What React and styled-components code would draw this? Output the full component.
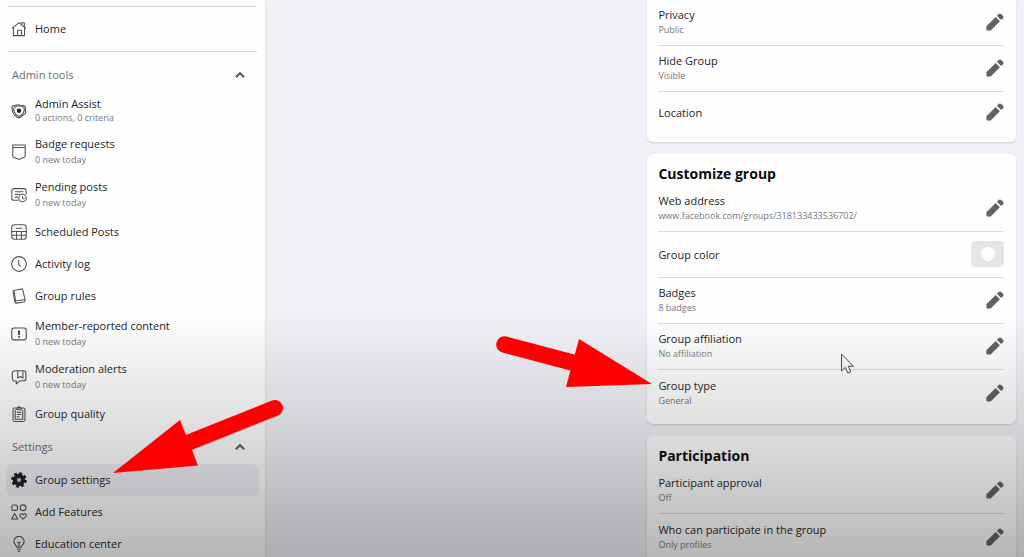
import React from "react";
import styled, { createGlobalStyle } from "styled-components";

const GlobalStyle = createGlobalStyle`
  * { box-sizing: border-box; }
  body { margin: 0; background: #f0f1f6; }
  h2, h3, p { margin: 0; }
  button { border: 0; padding: 0; background: none; font: inherit; color: inherit; cursor: pointer; }
`;

const Page = styled.div`
  position: relative;
  display: flex;
  justify-content: space-between;
  height: 100vh;
  overflow: hidden;
  font-family: "Open Sans", "Noto Sans", sans-serif;
  font-size: 11px;
  line-height: 14px;
  color: #242528;
`;

const Sidebar = styled.nav`
  width: 25%;
  min-width: 265px;
  flex-shrink: 0;
  padding: 6px 6px 0;
  background: #fefefe;
  box-shadow: 0 0 3px rgba(0, 0, 0, 0.12);
`;

const Rule = styled.hr`
  height: 1px;
  margin: 0 2px;
  border: 0;
  background: #dcdde1;
`;

const HomeBlock = styled.div`
  padding: 6px 0;
`;

const SectionToggle = styled.button`
  display: flex;
  align-items: center;
  justify-content: space-between;
  width: 100%;
  height: 34px;
  margin-top: ${(p) => (p.$spaced ? "6px" : "0")};
  padding: 0 14px 0 6px;
  font-weight: 500;
  color: #6c6d71;
  text-align: left;
`;

const NavItem = styled.a`
  display: flex;
  align-items: center;
  gap: 8px;
  height: ${(p) => p.$height}px;
  padding: 0 5px;
  border-radius: 6px;
  background: ${(p) => (p.$active ? "#f0f0f6" : "transparent")};
  color: inherit;
  text-decoration: none;
`;

const NavText = styled.span`
  display: flex;
  flex-direction: column;
  line-height: ${(p) => (p.$tight ? "14px" : "16px")};
`;

const Label = styled.span`
  font-weight: 500;
`;

const Note = styled.span`
  font-size: 9px;
  color: #77787c;
`;

const Content = styled.main`
  width: 36%;
  min-width: 368px;
  margin-right: 8px;
`;

const Card = styled.section`
  margin-bottom: 12px;
  padding: ${(p) => (p.$continued ? "0 12px 9px 11px" : "10px 12px 8px 11px")};
  border-radius: ${(p) => (p.$continued ? "0 0 6px 6px" : "6px")};
  background: #fefefe;
  box-shadow: 0 1px 2px rgba(0, 0, 0, 0.14);
`;

const CardTitle = styled.h2`
  font-size: 14px;
  line-height: 20px;
  padding-bottom: 2px;
  font-weight: 700;
  color: #0c0d0f;
`;

const SettingRow = styled.div`
  display: flex;
  align-items: center;
  justify-content: space-between;
  min-height: ${(p) => (p.$short ? "41px" : "46px")};
  padding: 7px 0 8px;
  border-bottom: 1px solid #dcdde1;
  &:last-child { border-bottom: 0; }
`;

const SettingText = styled.div`
  display: flex;
  flex-direction: column;
  line-height: 15px;
`;

const EditButton = styled.button`
  display: flex;
  color: #616266;
`;

const ColorButton = styled.button`
  display: flex;
  align-items: center;
  justify-content: center;
  width: 33px;
  height: 26px;
  border-radius: 4px;
  background: #e5e5ea;
`;

const Swatch = styled.span`
  width: 14px;
  height: 14px;
  border-radius: 50%;
  background: #fefefe;
`;

const Shade = styled.div`
  position: absolute;
  inset: 0;
  pointer-events: none;
  background: linear-gradient(
    to bottom,
    rgba(0, 0, 0, 0) 56%,
    rgba(0, 0, 0, 0.04) 63%,
    rgba(0, 0, 0, 0.12) 76%,
    rgba(0, 0, 0, 0.28) 100%
  );
`;

const Annotation = styled.svg`
  position: absolute;
  left: ${(p) => p.$x}px;
  top: ${(p) => p.$y}px;
  pointer-events: none;
`;

const NavIcon = styled.svg`
  flex-shrink: 0;
  color: ${(p) => (p.$solid ? "#1f2022" : "#505155")};
`;

const icons = {
  home: (
    <>
      <path d="M1 7 7.500 1.500 14 7M2.300 6v7.700h10.400V6M10 3.400V1.700h2.500v4" />
      <path d="M6.200 13.500V8.700h3.600v4.800" />
    </>
  ),
  assist: (
    <>
      <path d="M1 3.500C2 1.800 4 2.300 5.500 1.900 8 1.200 9 2.800 11 2.500c2-.2 3 1 2.400 2.800-.4 1.500.8 2.500.3 4-.6 1.700-2.200 1.500-3.300 2.700-1.200 1.400-2.800 2.500-4.400 1.400-1.200-.9-2.500-1-3-2.500C2.500 9.300 1 8.700 1.300 6.900 1.400 5.700.4 4.700 1 3.500z" />
      <path d="M3 4.200C5 2.500 10 2.200 12 4.200c1.500 2-.7 7.300-4 8.200C4.500 12.700 1.300 6.300 3 4.200z" />
      <circle cx="7.500" cy="7.200" r="1.600" fill="#1f2022" stroke="#1f2022" />
    </>
  ),
  badge: <path d="M1.700 1h11.600v10.200q0 .8-.8 1.200L8.500 14q-1 .5-2 0l-4-1.600q-.8-.4-.8-1.200zM1.700 3.300h11.600" />,
  pending: (
    <>
      <path d="M7 12.500H2.800A2 2 0 0 1 .8 10.500v-7a2 2 0 0 1 2-2h9.400a2 2 0 0 1 2 2v3.300M3.500 4.500h8M3.500 7h4.500M3.500 9.500h3" />
      <circle cx="10.800" cy="10.300" r="3.500" />
      <path d="M10.800 8.500v2h2" />
    </>
  ),
  scheduled: (
    <>
      <rect x=".7" y=".7" width="13.600" height="13.600" rx="2.500" />
      <path d="M.7 7h13.600M.7 10.600h13.600M5.200 7v7.300M9.800 7v7.300M4.500 4h6" />
    </>
  ),
  clock: (
    <>
      <circle cx="7.500" cy="7.500" r="6.900" />
      <path d="M7.200 3.500v4.500l2 1.700" />
    </>
  ),
  rules: (
    <>
      <path d="M2.600 2.300 9.800.9q1-.2 1.200.8l2.200 9-8.800 1.500z" />
      <path d="M2.600 2.300q-.8.300-.6 1.300l1.600 9.600q.3 1.200 1.500 1l7.800-1.400.3-2.100M4.400 12.200l-.9.600" />
    </>
  ),
  report: (
    <>
      <rect x=".7" y="1.800" width="13.600" height="11.200" rx="2" />
      <path d="M7.500 4.200v4.300M7.500 9.700v1.300" stroke="#1f2022" strokeWidth="1.500" />
    </>
  ),
  moderation: (
    <>
      <path d="M4.500 1.700h7.300a2.200 2.200 0 0 1 2.200 2.200v5a2.200 2.200 0 0 1-2.200 2.200H8.300L5 14v-2.800H3.400A2.200 2.200 0 0 1 1.200 9V4.300q0-2.600 3.300-2.600z" />
      <path d="M6.300 1.700v6.800l2.500-1.500 2.400 1.500V1.700" />
    </>
  ),
  quality: (
    <>
      <rect x="1.900" y="1.800" width="11.200" height="12.700" rx="1.500" />
      <path d="M5.500 3.600V1.700h1L7.500.5l1 1.200h1v1.900zM4 3.500v8.900h7V3.500M5.500 6h4M5.500 8h4M5.500 10h2.500" />
    </>
  ),
  gear: (
    <>
      <circle cx="7.500" cy="7.500" r="3.900" strokeWidth="3.800" />
      <circle cx="7.500" cy="7.500" r="6.200" strokeWidth="2.200" strokeDasharray="2.700 2.170" />
      <circle cx="7.500" cy="7.500" r="1.400" stroke="#85868a" strokeWidth=".8" />
    </>
  ),
  features: (
    <>
      <rect x=".8" y="1" width="5.200" height="5" rx="1.300" />
      <circle cx="11.300" cy="3.500" r="2.700" />
      <path d="M3.400 9 6.300 14H.6zM11.300 14.200 8.600 11.600c-1.300-2 1.500-3.300 2.700-1.500 1.200-1.800 4-.5 2.700 1.500z" />
    </>
  ),
  bulb: (
    <path d="M5.500 10.500C5.200 8.700 2.700 8 2.700 5.200a4.800 4.800 0 0 1 9.600 0c0 2.800-2.500 3.500-2.800 5.300zM5.500 12.500h4M6.300 14.300h2.400M7.500 10.500V7l-1.500-1.500M7.500 7 9 5.500" />
  ),
};

const Icon = ({ name }) => (
  <NavIcon $solid={name === "gear"} width="16" height="16" viewBox="0 0 15 15" fill="none" stroke="currentColor" strokeWidth="1" strokeLinejoin="round" aria-hidden="true">
    {icons[name]}
  </NavIcon>
);

const Chevron = () => (
  <svg width="10" height="6" viewBox="0 0 10 6" fill="none" stroke="#5a5b5f" strokeWidth="2" aria-hidden="true">
    <path d="M.8 5.200 5 1.200l4.200 4" />
  </svg>
);

const Pencil = () => (
  <svg width="18" height="18" viewBox="0 0 18 18" fill="currentColor" aria-hidden="true">
    <path d="M.4 13.200 9.700 4l4.200 4.200-9.200 9.200H1.400a1 1 0 0 1-1-1z" />
    <path d="M10.900 2.800 12.700 1a1.800 1.800 0 0 1 2.500 0L17 2.800a1.800 1.800 0 0 1 0 2.400L15.100 7z" />
  </svg>
);

const adminTools = [
  { icon: "assist", label: "Admin Assist", note: "0 actions, 0 criteria", height: 38, tight: true },
  { icon: "badge", label: "Badge requests", note: "0 new today" },
  { icon: "pending", label: "Pending posts", note: "0 new today" },
  { icon: "scheduled", label: "Scheduled Posts" },
  { icon: "clock", label: "Activity log" },
  { icon: "rules", label: "Group rules" },
  { icon: "report", label: "Member-reported content", note: "0 new today" },
  { icon: "moderation", label: "Moderation alerts", note: "0 new today" },
  { icon: "quality", label: "Group quality" },
];

const settings = [
  { icon: "gear", label: "Group settings", active: true },
  { icon: "features", label: "Add Features" },
  { icon: "bulb", label: "Education center" },
];

const NavLink = ({ icon, label, note, height, tight, active }) => (
  <NavItem href="#" $height={height || (note ? 43 : 32)} $active={active} aria-current={active ? "page" : undefined}>
    <Icon name={icon} />
    <NavText $tight={tight}>
      <Label>{label}</Label>
      {note && <Note>{note}</Note>}
    </NavText>
  </NavItem>
);

const Setting = ({ label, value, short, children }) => (
  <SettingRow $short={short}>
    <SettingText>
      <Label>{label}</Label>
      {value && <Note>{value}</Note>}
    </SettingText>
    {children || (
      <EditButton type="button" aria-label={`Edit ${label}`}>
        <Pencil />
      </EditButton>
    )}
  </SettingRow>
);

export default function App() {
  return (
    <Page>
      <GlobalStyle />
      <Sidebar>
        <Rule />
        <HomeBlock>
          <NavLink icon="home" label="Home" />
        </HomeBlock>
        <Rule />
        <SectionToggle type="button" aria-expanded="true" $spaced>
          Admin tools
          <Chevron />
        </SectionToggle>
        {adminTools.map((item) => (
          <NavLink key={item.label} {...item} />
        ))}
        <SectionToggle type="button" aria-expanded="true">
          Settings
          <Chevron />
        </SectionToggle>
        {settings.map((item) => (
          <NavLink key={item.label} {...item} />
        ))}
      </Sidebar>
      <Content>
        <Card $continued>
          <Setting label="Privacy" value="Public" />
          <Setting label="Hide Group" value="Visible" />
          <Setting label="Location" short />
        </Card>
        <Card>
          <CardTitle>Customize group</CardTitle>
          <Setting label="Web address" value="www.facebook.com/groups/318133433536702/" />
          <Setting label="Group color">
            <ColorButton type="button" aria-label="Edit Group color">
              <Swatch />
            </ColorButton>
          </Setting>
          <Setting label="Badges" value="8 badges" />
          <Setting label="Group affiliation" value="No affiliation" />
          <Setting label="Group type" value="General" />
        </Card>
        <Card>
          <CardTitle>Participation</CardTitle>
          <Setting label="Participant approval" value="Off" />
          <Setting label="Who can participate in the group" value="Only profiles" />
        </Card>
      </Content>
      <Shade />
      <Annotation $x={112} $y={398} width="174" height="78" viewBox="112 398 174 78" aria-hidden="true">
        <path d="M113 473 180 420 198 465.500z" fill="#f00" />
        <path d="M185 444 275 408" stroke="#f00" strokeWidth="16" strokeLinecap="round" />
      </Annotation>
      <Annotation $x={494} $y={334} width="160" height="56" viewBox="494 334 160 56" aria-hidden="true">
        <path d="M652 384 579 339 566 387z" fill="#f00" />
        <path d="M504.500 344.500 578 364" stroke="#f00" strokeWidth="16.500" strokeLinecap="round" />
      </Annotation>
      <Annotation $x={840} $y={352} width="16" height="23" viewBox="0 0 16 23" aria-hidden="true">
        <path d="M1.500 2v17l3.800-3.600 2.600 5.700 2.900-1.300-2.500-5.500h5.200z" fill="#eee" stroke="#4a4a4e" />
      </Annotation>
    </Page>
  );
}
